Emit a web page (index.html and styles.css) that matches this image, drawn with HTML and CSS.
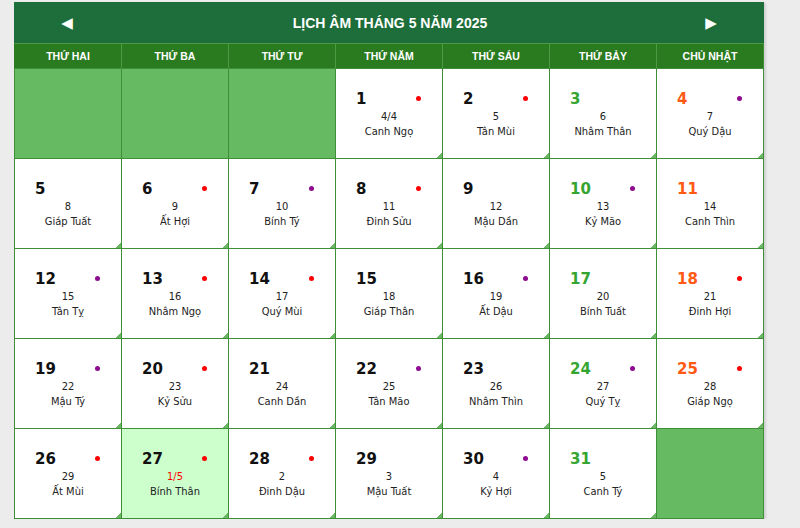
FILE: index.html
```html
<!DOCTYPE html>
<html lang="vi">
<head>
<meta charset="utf-8">
<title>Lịch âm tháng 5 năm 2025</title>
<link rel="stylesheet" href="styles.css">
</head>
<body>
<div class="cal">
  <div class="cal-head">
    <span class="nav">&#9664;</span>
    <span class="title">LỊCH ÂM THÁNG 5 NĂM 2025</span>
    <span class="nav">&#9654;</span>
  </div>
  <div class="grid">
    <div class="wd">THỨ HAI</div>
    <div class="wd">THỨ BA</div>
    <div class="wd">THỨ TƯ</div>
    <div class="wd">THỨ NĂM</div>
    <div class="wd">THỨ SÁU</div>
    <div class="wd">THỨ BẢY</div>
    <div class="wd">CHỦ NHẬT</div>

    <div class="cell empty"></div>
    <div class="cell empty"></div>
    <div class="cell empty"></div>
    <div class="cell"><div class="top"><span class="d">1</span><i class="dot red"></i></div><div class="l">4/4</div><div class="c">Canh Ngọ</div></div>
    <div class="cell"><div class="top"><span class="d">2</span><i class="dot red"></i></div><div class="l">5</div><div class="c">Tân Mùi</div></div>
    <div class="cell"><div class="top"><span class="d sat">3</span></div><div class="l">6</div><div class="c">Nhâm Thân</div></div>
    <div class="cell"><div class="top"><span class="d sun">4</span><i class="dot pur"></i></div><div class="l">7</div><div class="c">Quý Dậu</div></div>

    <div class="cell"><div class="top"><span class="d">5</span></div><div class="l">8</div><div class="c">Giáp Tuất</div></div>
    <div class="cell"><div class="top"><span class="d">6</span><i class="dot red"></i></div><div class="l">9</div><div class="c">Ất Hợi</div></div>
    <div class="cell"><div class="top"><span class="d">7</span><i class="dot pur"></i></div><div class="l">10</div><div class="c">Bính Tý</div></div>
    <div class="cell"><div class="top"><span class="d">8</span><i class="dot red"></i></div><div class="l">11</div><div class="c">Đinh Sửu</div></div>
    <div class="cell"><div class="top"><span class="d">9</span></div><div class="l">12</div><div class="c">Mậu Dần</div></div>
    <div class="cell"><div class="top"><span class="d sat">10</span><i class="dot pur"></i></div><div class="l">13</div><div class="c">Kỷ Mão</div></div>
    <div class="cell"><div class="top"><span class="d sun">11</span></div><div class="l">14</div><div class="c">Canh Thìn</div></div>

    <div class="cell"><div class="top"><span class="d">12</span><i class="dot pur"></i></div><div class="l">15</div><div class="c">Tân Tỵ</div></div>
    <div class="cell"><div class="top"><span class="d">13</span><i class="dot red"></i></div><div class="l">16</div><div class="c">Nhâm Ngọ</div></div>
    <div class="cell"><div class="top"><span class="d">14</span><i class="dot red"></i></div><div class="l">17</div><div class="c">Quý Mùi</div></div>
    <div class="cell"><div class="top"><span class="d">15</span></div><div class="l">18</div><div class="c">Giáp Thân</div></div>
    <div class="cell"><div class="top"><span class="d">16</span><i class="dot pur"></i></div><div class="l">19</div><div class="c">Ất Dậu</div></div>
    <div class="cell"><div class="top"><span class="d sat">17</span></div><div class="l">20</div><div class="c">Bính Tuất</div></div>
    <div class="cell"><div class="top"><span class="d sun">18</span><i class="dot red"></i></div><div class="l">21</div><div class="c">Đinh Hợi</div></div>

    <div class="cell"><div class="top"><span class="d">19</span><i class="dot pur"></i></div><div class="l">22</div><div class="c">Mậu Tý</div></div>
    <div class="cell"><div class="top"><span class="d">20</span><i class="dot red"></i></div><div class="l">23</div><div class="c">Kỷ Sửu</div></div>
    <div class="cell"><div class="top"><span class="d">21</span></div><div class="l">24</div><div class="c">Canh Dần</div></div>
    <div class="cell"><div class="top"><span class="d">22</span><i class="dot pur"></i></div><div class="l">25</div><div class="c">Tân Mão</div></div>
    <div class="cell"><div class="top"><span class="d">23</span></div><div class="l">26</div><div class="c">Nhâm Thìn</div></div>
    <div class="cell"><div class="top"><span class="d sat">24</span><i class="dot pur"></i></div><div class="l">27</div><div class="c">Quý Tỵ</div></div>
    <div class="cell"><div class="top"><span class="d sun">25</span><i class="dot red"></i></div><div class="l">28</div><div class="c">Giáp Ngọ</div></div>

    <div class="cell"><div class="top"><span class="d">26</span><i class="dot red"></i></div><div class="l">29</div><div class="c">Ất Mùi</div></div>
    <div class="cell today"><div class="top"><span class="d">27</span><i class="dot red"></i></div><div class="l lred">1/5</div><div class="c">Bính Thân</div></div>
    <div class="cell"><div class="top"><span class="d">28</span><i class="dot red"></i></div><div class="l">2</div><div class="c">Đinh Dậu</div></div>
    <div class="cell"><div class="top"><span class="d">29</span></div><div class="l">3</div><div class="c">Mậu Tuất</div></div>
    <div class="cell"><div class="top"><span class="d">30</span><i class="dot pur"></i></div><div class="l">4</div><div class="c">Kỷ Hợi</div></div>
    <div class="cell"><div class="top"><span class="d sat">31</span></div><div class="l">5</div><div class="c">Canh Tý</div></div>
    <div class="cell empty"></div>
  </div>
</div>
</body>
</html>
```
FILE: styles.css
```css
html, body {
  margin: 0;
  padding: 0;
  background: #ececec;
}
body {
  padding: 2px 0 0 14px;
  font-family: "DejaVu Sans", Verdana, sans-serif;
}
.cal {
  width: 750px;
  box-shadow: 2px 1px 2px rgba(0,0,0,0.12);
}
.cal-head {
  height: 41px;
  background: #1d6e3a;
  display: flex;
  align-items: center;
  justify-content: space-between;
  padding: 0 46px 0 46px;
  color: #fff;
}
.nav {
  font-family: "DejaVu Sans", sans-serif;
  font-size: 15px;
  width: 14px;
  text-align: center;
}
.title {
  font-family: "Liberation Sans", Arial, sans-serif;
  font-weight: bold;
  font-size: 14px;
  margin-left: 2px;
}
.grid {
  display: grid;
  grid-template-columns: repeat(7, 107px);
  grid-template-rows: 25px repeat(5, 90px);
  border-right: 1px solid #3f8f39;
  border-bottom: 1px solid #3f8f39;
  background: #3f8f39;
}
.wd {
  background: #2a7b20;
  border-top: 1px solid #4e9a44;
  border-left: 1px solid #4e9a44;
  color: #fff;
  font-family: "Liberation Sans", Arial, sans-serif;
  font-weight: bold;
  font-size: 10.5px;
  display: flex;
  align-items: center;
  justify-content: center;
}
.wd:first-child {
  border-left-color: #2a7b20;
}
.cell {
  position: relative;
  background: #fff;
  border-top: 1px solid #3f8f39;
  border-left: 1px solid #3f8f39;
  display: flex;
  flex-direction: column;
  align-items: center;
  color: #222;
  font-family: "DejaVu Sans Condensed", "DejaVu Sans", sans-serif;
  font-stretch: condensed;
  font-size: 11px;
}
.cell::after {
  content: "";
  position: absolute;
  right: 0;
  bottom: 0;
  width: 6px;
  height: 6px;
  background: linear-gradient(135deg, transparent 55%, #6bb864 55%);
}
.cell.empty {
  background: #66bb62;
}
.cell.empty::after {
  display: none;
}
.cell.today {
  background: #ccffcc;
}
.top {
  align-self: stretch;
  display: flex;
  justify-content: space-between;
  align-items: center;
  padding: 20px 21px 0 20px;
  height: 19px;
}
.d {
  font-family: "DejaVu Sans", Verdana, sans-serif;
  font-stretch: normal;
  font-weight: bold;
  font-size: 15px;
  color: #111;
}
.d.sat { color: #35a531; }
.d.sun { color: #ff5a14; }
.dot {
  width: 5px;
  height: 5px;
  border-radius: 50%;
}
.dot.red { background: #ff0000; }
.dot.pur { background: #8e0a8e; }
.l {
  margin-top: 1px;
  line-height: 15px;
}
.lred { color: #f00; }
.c {
  line-height: 15px;
}
```
